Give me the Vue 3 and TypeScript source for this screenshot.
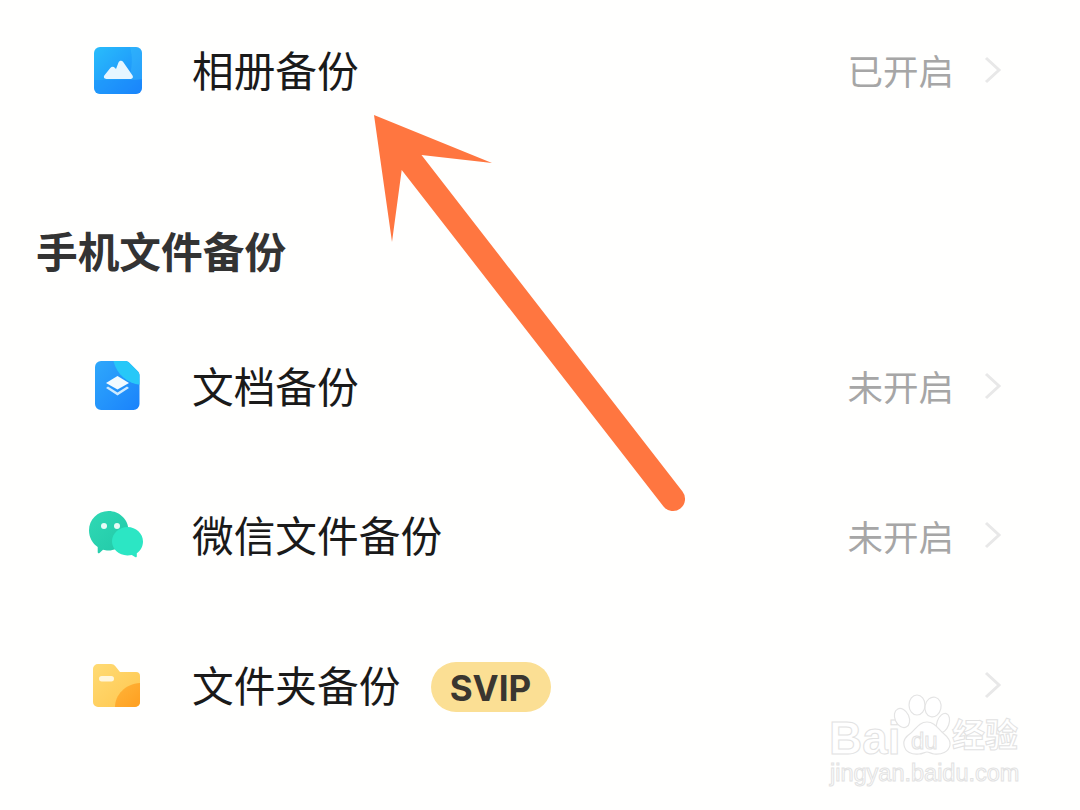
<script setup lang="ts">
const docRows = [
  { label: '文档备份', status: '未开启', icon: 'doc' },
  { label: '微信文件备份', status: '未开启', icon: 'chat' },
  { label: '文件夹备份', status: '', icon: 'folder', badge: 'SVIP' },
]
</script>

<template>
  <div class="page">
    <section class="row first">
      <svg class="icon" viewBox="0 0 56 56">
        <defs>
          <linearGradient id="ph" x1="0" y1="0" x2="1" y2="1">
            <stop offset="0" stop-color="#29bdfb" />
            <stop offset="1" stop-color="#1a86fb" />
          </linearGradient>
        </defs>
        <rect x="6" y="4" width="48" height="47" rx="6" fill="url(#ph)" />
        <path d="M42 4h6a6 6 0 0 1 6 6v26c-6 1-10 1-13 0 3-10 4-22 1-32z" fill="#46c6fb" opacity=".3" />
        <path d="M6 37h48v8a6 6 0 0 1-6 6H12a6 6 0 0 1-6-6z" fill="#1a80fb" opacity=".3" />
        <path d="M18.500 36c-2.500 0-3.300-2.200-2-3.700l5.800-7.200c1.400-1.600 3.300-1.700 4.700-.2l1 1.100 2.500-6.400c.9-2.200 3.500-2.300 4.700-.5l9.300 13.500c1 1.600.3 3.400-1.700 3.400z" fill="#e6f6ff" />
      </svg>
      <span class="label">相册备份</span>
      <span class="status">已开启</span>
      <svg class="chevron" viewBox="0 0 18 28"><path d="M2 2l13 12L2 26" /></svg>
    </section>

    <h2 class="title">手机文件备份</h2>

    <section v-for="r in docRows" :key="r.label" class="row">
      <svg v-if="r.icon === 'doc'" class="icon" viewBox="0 0 56 56">
        <defs>
          <linearGradient id="dc" x1="0" y1="0" x2="1" y2="1">
            <stop offset="0" stop-color="#2fa8fb" />
            <stop offset="1" stop-color="#1a82fb" />
          </linearGradient>
          <clipPath id="dclip">
            <path d="M13 2h24c1.500 0 2.800.5 4 1.500l9 9c1 1.200 1.500 2.500 1.500 4V45a6 6 0 0 1-6 6H13a6 6 0 0 1-6-6V8a6 6 0 0 1 6-6z" />
          </clipPath>
        </defs>
        <g clip-path="url(#dclip)">
          <rect x="7" y="2" width="45" height="49" fill="url(#dc)" />
          <path d="M25 0h30v26c-14 0-27-10-30-26z" fill="#27c8f8" />
        </g>
        <path d="M29.500 17L41 24l-11.500 6.500L18 24z" fill="#f2fbff" />
        <path d="M18 29l2-1.500 9.500 6 9.500-6 2 1.500-11.500 7.500z" fill="#cdeaff" />
      </svg>
      <svg v-else-if="r.icon === 'chat'" class="icon" viewBox="0 0 56 56">
        <defs>
          <linearGradient id="ct" x1="0" y1="0" x2="1" y2="1">
            <stop offset="0" stop-color="#2fd9b4" />
            <stop offset="1" stop-color="#22c8a8" />
          </linearGradient>
        </defs>
        <path d="M20.500 3C31.500 3 40.500 11.500 40.500 22.500S31.500 42.500 20.500 42.500c-2 0-4-.3-5.500-.8l-3.500 3.300c-.8.700-1.800.3-1.800-.9v-5.100C4.500 35.500 1 29.500 1 22.500 1 11.500 9.500 3 20.500 3z" fill="url(#ct)" />
        <circle cx="16" cy="18" r="3" fill="#e8fbf6" />
        <circle cx="29" cy="18" r="3" fill="#e8fbf6" />
        <path d="M39.500 19C48 19 55 25.500 55 33.500c0 5-2.400 9-6.200 11.700v3c0 1-1 1.300-1.700.7l-3.300-2c-1.300.3-2.900.5-4.300.5C31 47.500 24 41 24 33.500 24 25.500 31 19 39.500 19z" fill="#2ce6c4" />
      </svg>
      <svg v-else class="icon" viewBox="0 0 56 56">
        <defs>
          <linearGradient id="fd" x1="0" y1="0" x2="1" y2="1">
            <stop offset="0" stop-color="#ffdb74" />
            <stop offset="1" stop-color="#ffc64e" />
          </linearGradient>
          <linearGradient id="fo" x1="0" y1="0" x2="1" y2="1">
            <stop offset="0" stop-color="#ffb53a" />
            <stop offset="1" stop-color="#ff9f20" />
          </linearGradient>
        </defs>
        <path d="M10 6h13c2 0 3.200.8 4.200 2l4.800 6h16a4 4 0 0 1 4 4v26a5 5 0 0 1-5 5H10a5 5 0 0 1-5-5V11a5 5 0 0 1 5-5z" fill="url(#fd)" />
        <path d="M27 49c0-12 10-23 25-24v19a5 5 0 0 1-5 5z" fill="url(#fo)" />
        <rect x="11" y="18" width="15" height="5.500" rx="2.750" fill="#fff6dc" />
      </svg>
      <span class="label">{{ r.label }}</span>
      <span v-if="r.badge" class="badge">{{ r.badge }}</span>
      <span v-if="r.status" class="status">{{ r.status }}</span>
      <svg class="chevron" viewBox="0 0 18 28"><path d="M2 2l13 12L2 26" /></svg>
    </section>

    <svg class="arrow" viewBox="0 0 1080 810">
      <path d="M374 115L492 163 421.500 155 682.500 491.600A12 12 0 0 1 663.500 506.400L401.700 170 392 242z" fill="#ff7640" />
    </svg>

    <div class="mark">
      <span class="mark-bai">Bai</span>
      <svg class="paw" viewBox="0 0 66 66">
        <g fill="#fff" stroke="#e4e4e4" stroke-width="1.200">
          <ellipse cx="11" cy="25" rx="7" ry="10" transform="rotate(-25 11 25)" />
          <ellipse cx="26" cy="12" rx="8" ry="10" />
          <ellipse cx="42" cy="14" rx="8" ry="10" transform="rotate(12 42 14)" />
          <ellipse cx="52" cy="30" rx="6" ry="10" transform="rotate(20 52 30)" />
          <path d="M36 29c8 0 11 7 16 11 6 5 8 8 7 12-1 7-9 10-16 9-3-.5-5-2-7-2s-5 2-8 2c-7 1-14-2-15-9-1-4 1-8 7-12 5-4 8-11 16-11z" />
        </g>
      </svg>
      <span class="mark-du">du</span>
      <span class="mark-cn">经验</span>
      <span class="mark-url">jingyan.baidu.com</span>
    </div>
  </div>
</template>

<style>
html, body { margin: 0; background: #fff; }
</style>

<style scoped>
.page {
  position: relative;
  width: 1080px;
  height: 810px;
  overflow: hidden;
  background: #fffffe;
  font-family: "Noto Sans CJK SC", "Noto Sans", sans-serif;
}
.row {
  display: flex;
  align-items: center;
  height: 149.500px;
  padding: 0 78px 0 88px;
}
.row.first { height: 142px; }
.icon { width: 56px; height: 56px; flex: none; margin-right: 48px; }
.label { font-size: 41.700px; line-height: 1; padding-bottom: 2px; color: #1a1a1a; white-space: nowrap; }
.status { margin-left: auto; font-size: 35.500px; line-height: 1; padding-bottom: 2px; color: #a6a6a6; }
.chevron {
  width: 18px;
  height: 28px;
  margin-left: 30px;
  margin-bottom: 2px;
  flex: none;
  fill: none;
  stroke: #e8e8e8;
  stroke-width: 3;
}
.badge + .chevron { margin-left: auto; }
.title {
  margin: 78px 0 32px 36px;
  height: 60px;
  font-size: 41.700px;
  line-height: 60px;
  font-weight: 700;
  color: #333;
}
.badge {
  display: flex;
  align-items: center;
  justify-content: center;
  box-sizing: border-box;
  width: 120px;
  height: 50px;
  margin: 2px 0 0 31px;
  padding: 2px 2px 0 0;
  border-radius: 25px;
  background: #fbdf94;
  font-family: Inter, sans-serif;
  font-size: 35px;
  font-weight: 700;
  color: #3a3630;
}
.arrow { position: absolute; inset: 0; width: 1080px; height: 810px; pointer-events: none; }
.mark { position: absolute; left: 0; top: 0; width: 1080px; height: 810px; pointer-events: none; }
.mark span {
  position: absolute;
  color: #fff;
  -webkit-text-stroke: 1px #e2e2e2;
  line-height: 1;
  white-space: nowrap;
}
.mark-bai { left: 829px; top: 715px; font: 700 46px "Liberation Sans", sans-serif; }
.paw { position: absolute; left: 891px; top: 693px; width: 66px; height: 66px; }
.mark-du { left: 911px; top: 729px; font: 400 24px "Liberation Sans", sans-serif; }
.mark-cn { left: 952px; top: 717px; font: 700 33px "Noto Sans CJK SC", sans-serif; }
.mark-url { left: 830px; top: 762px; font: 400 23.500px "Liberation Sans", sans-serif; }
</style>
